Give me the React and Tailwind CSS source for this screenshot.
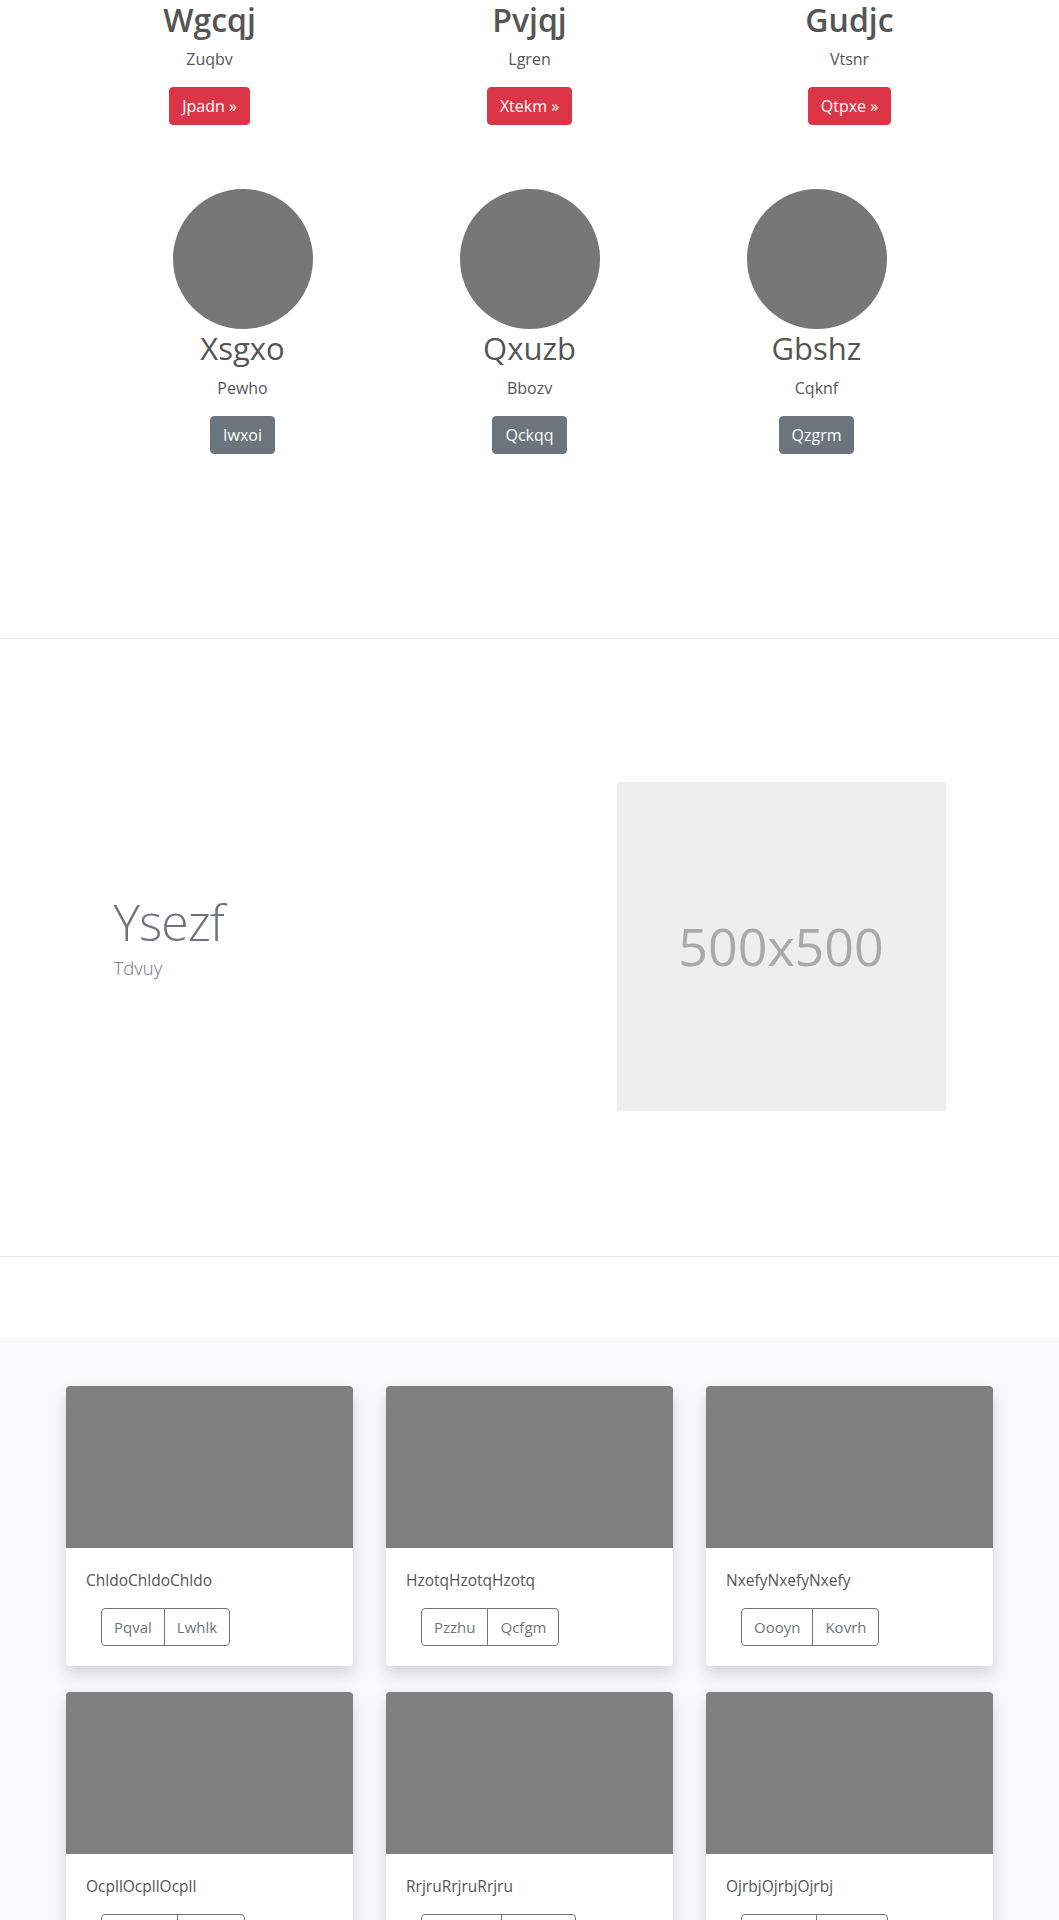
import React from "react";

const tops = [
  { h: "Wgcqj", s: "Zuqbv", b: "Jpadn" },
  { h: "Pvjqj", s: "Lgren", b: "Xtekm" },
  { h: "Gudjc", s: "Vtsnr", b: "Qtpxe" },
];

const people = [
  { h: "Xsgxo", s: "Pewho", b: "Iwxoi" },
  { h: "Qxuzb", s: "Bbozv", b: "Qckqq" },
  { h: "Gbshz", s: "Cqknf", b: "Qzgrm" },
];

const cards = [
  { t: "ChldoChldoChldo", a: "Pqval", b: "Lwhlk" },
  { t: "HzotqHzotqHzotq", a: "Pzzhu", b: "Qcfgm" },
  { t: "NxefyNxefyNxefy", a: "Oooyn", b: "Kovrh" },
  { t: "OcpllOcpllOcpll", a: "Mwkhn", b: "Dtqvo" },
  { t: "RrjruRrjruRrjru", a: "Hqwmo", b: "Gnxwd" },
  { t: "OjrbjOjrbjOjrbj", a: "Vqmnu", b: "Bzkwo" },
];

export default function App() {
  return (
    <div className="font-['Segoe_UI','Open_Sans',sans-serif] bg-white">
      {/* top headings */}
      <div className="w-[960px] mx-auto grid grid-cols-3 text-center">
        {tops.map((t) => (
          <div key={t.h} className="px-[15px]">
            <h2 className="text-[32px] leading-[1.2] font-semibold text-[#555] mb-2 pt-[1px]">{t.h}</h2>
            <p className="text-base leading-6 text-[#555] mb-4">{t.s}</p>
            <p className="mb-4">
              <a className="inline-block bg-[#dc3545] text-white rounded border border-[#dc3545] px-3 py-1.5 text-base leading-6">
                {t.b} »
              </a>
            </p>
          </div>
        ))}
      </div>

      {/* circles */}
      <div className="w-[861px] mx-auto grid grid-cols-3 text-center mt-[48px]">
        {people.map((p) => (
          <div key={p.h}>
            <div className="w-[140px] h-[140px] rounded-full bg-[#777] mx-auto" />
            <h2 className="text-[31px] leading-[38.4px] font-normal text-[#555] mb-2">{p.h}</h2>
            <p className="text-base leading-6 text-[#555] mb-4">{p.s}</p>
            <p className="mb-4">
              <a className="inline-block bg-[#6c757d] text-white rounded border border-[#6c757d] px-3 py-1.5 text-base leading-6">
                {p.b}
              </a>
            </p>
          </div>
        ))}
      </div>

      <div className="mt-[168px] border-t border-[#e6e6e6]" />

      {/* featurette */}
      <div className="h-[617px]">
        <div className="w-[960px] mx-auto flex items-start">
          <div className="w-[480px] pl-[64px] mt-[253px]">
            <h2 className="text-[50px] leading-[60px] font-light tracking-[-1px] text-[#6c757d]">Ysezf</h2>
            <p className="mt-[2px] text-[18.5px] leading-[27.75px] font-light text-[#6c757d]">Tdvuy</p>
          </div>
          <div className="w-[480px] pl-[87px] mt-[143px]">
            <div className="w-[329px] h-[329px] bg-[#eeeeee] flex items-center justify-center">
              <span className="text-[52px] text-[#aaaaaa] leading-none">500x500</span>
            </div>
          </div>
        </div>
      </div>

      <div className="border-t border-[#e6e6e6]" />

      {/* album */}
      <div className="mt-[80px] bg-[#f8f9fa] pt-[49px] pb-12">
        <div className="w-[927px] mx-auto grid grid-cols-3 gap-x-[33px] gap-y-[26px]">
          {cards.map((c) => (
            <div key={c.t} className="bg-white rounded overflow-hidden shadow-[0_8px_16px_rgba(0,0,0,0.15)]">
              <div className="h-[162px] bg-[#808080]" />
              <div className="p-5">
                <p className="text-[15.5px] leading-6 text-[#555] mb-4">{c.t}</p>
                <div className="ml-[15px] inline-flex">
                  <button className="border border-[#6c757d] text-[#6c757d] rounded-l px-3 py-1.5 text-[15px] leading-6 bg-transparent">
                    {c.a}
                  </button>
                  <button className="-ml-px border border-[#6c757d] text-[#6c757d] rounded-r px-3 py-1.5 text-[15px] leading-6 bg-transparent">
                    {c.b}
                  </button>
                </div>
              </div>
            </div>
          ))}
        </div>
      </div>
    </div>
  );
}
